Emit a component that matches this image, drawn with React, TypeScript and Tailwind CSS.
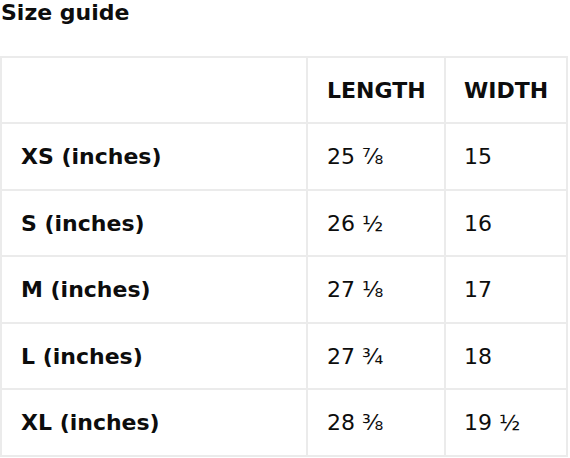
const rows = [
  { size: "XS (inches)", length: "25 ⅞", width: "15", h: "h-[67px]" },
  { size: "S (inches)", length: "26 ½", width: "16", h: "h-[66px]" },
  { size: "M (inches)", length: "27 ⅛", width: "17", h: "h-[67px]" },
  { size: "L (inches)", length: "27 ¾", width: "18", h: "h-[66px]" },
  { size: "XL (inches)", length: "28 ⅜", width: "19 ½", h: "h-[67px]" },
];

export default function App() {
  return (
    <div className="w-[570px] h-[458px] bg-white text-[#0d0d0d] font-['DejaVu_Sans',sans-serif] overflow-hidden">
      <h2 className="text-[22px] font-bold leading-[26px] pl-[1px]">Size guide</h2>
      <table className="mt-[30px] w-[568px] border-collapse text-[22px]">
        <thead>
          <tr className="h-[66px]">
            <th className="w-[306px] border-2 border-[#ebebeb]"></th>
            <th className="w-[138px] border-2 border-[#ebebeb] text-left font-bold pl-[19px]">LENGTH</th>
            <th className="border-2 border-[#ebebeb] text-left font-bold pl-[18px]">WIDTH</th>
          </tr>
        </thead>
        <tbody>
          {rows.map(r => (
            <tr key={r.size} className={r.h}>
              <td className="border-2 border-[#ebebeb] font-bold pl-[19px]">{r.size}</td>
              <td className="border-2 border-[#ebebeb] pl-[19px]">{r.length}</td>
              <td className="border-2 border-[#ebebeb] pl-[18px]">{r.width}</td>
            </tr>
          ))}
        </tbody>
      </table>
    </div>
  );
}
